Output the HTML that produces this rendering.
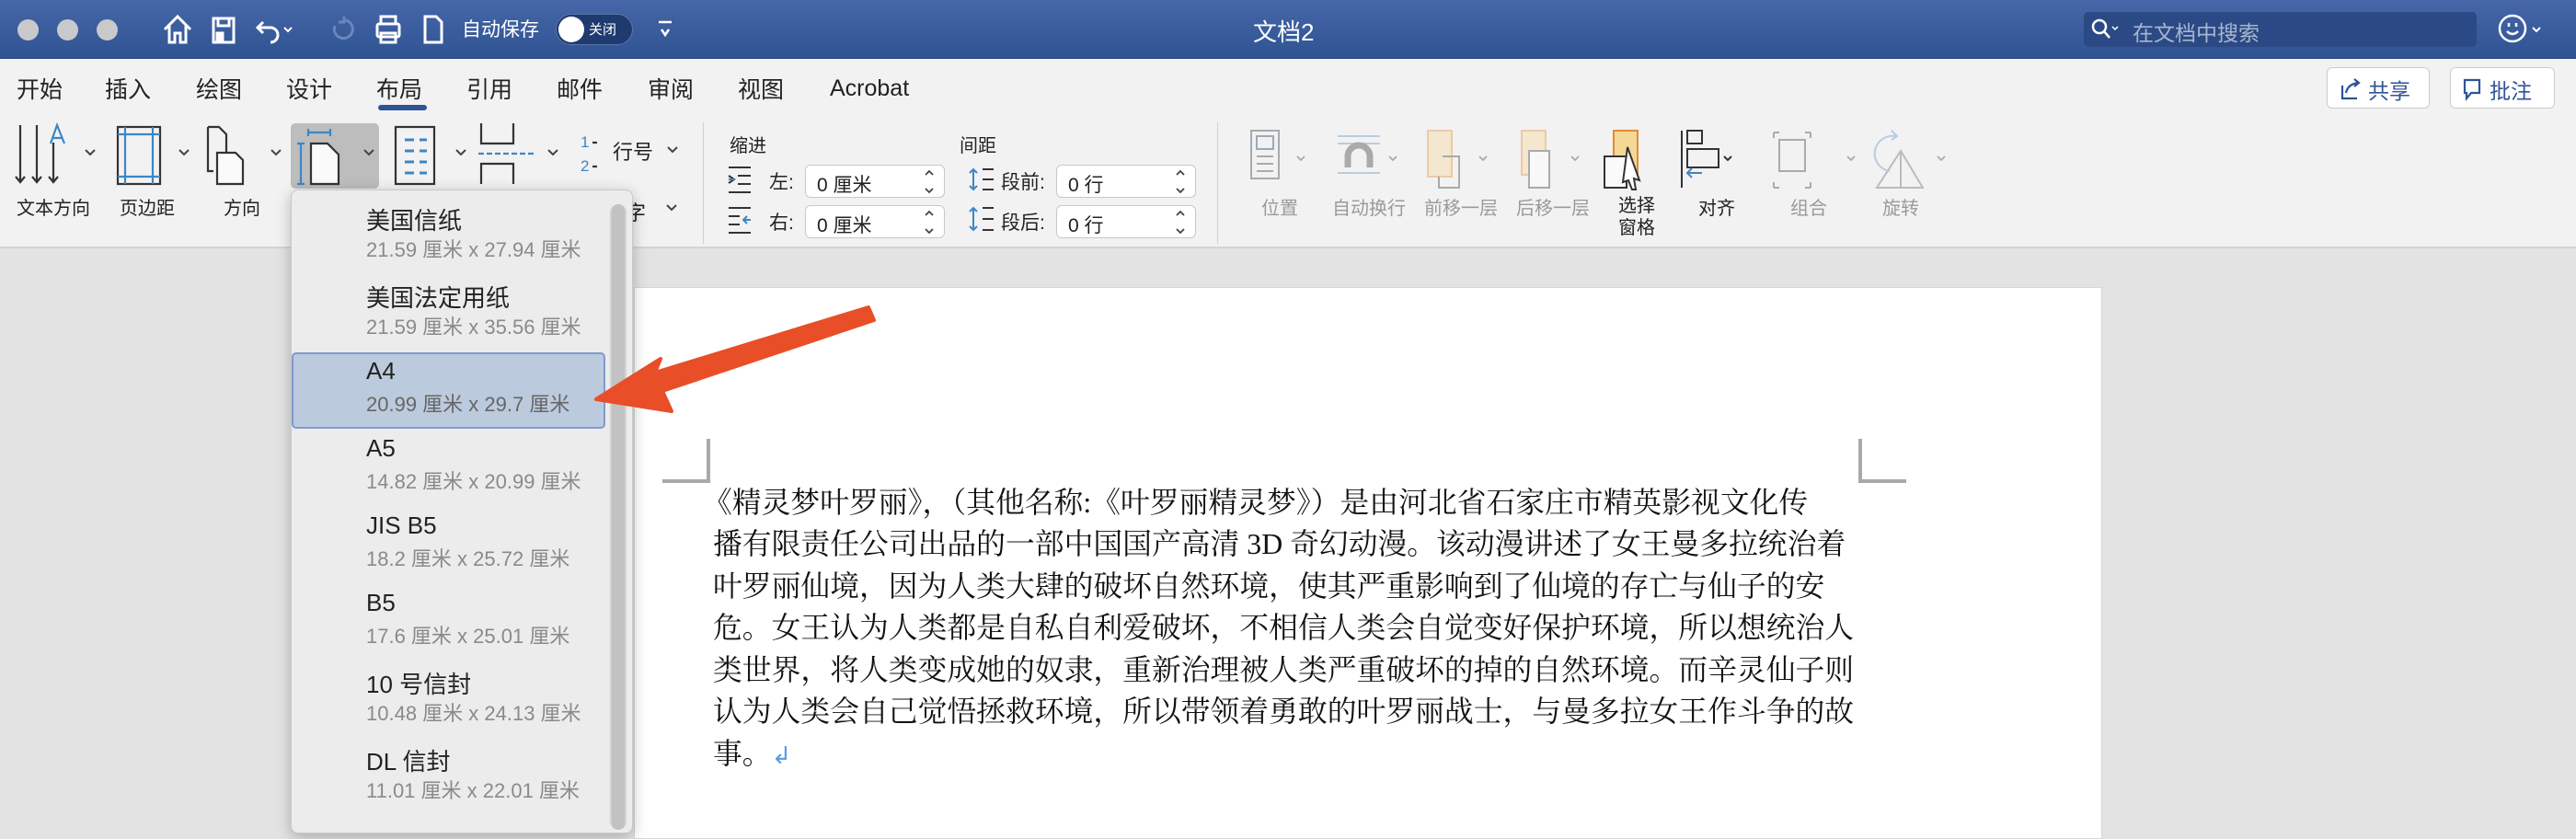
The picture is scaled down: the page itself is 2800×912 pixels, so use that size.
<!DOCTYPE html>
<html><head><meta charset="utf-8"><style>
*{margin:0;padding:0;box-sizing:border-box}
body{width:2800px;height:894px;overflow:hidden;position:relative;background:#e3e3e3;font-family:"Liberation Sans","Noto Sans CJK SC",sans-serif;color:#222}
.a{position:absolute;white-space:nowrap}
.title{left:0;top:0;width:2800px;height:64px;background:linear-gradient(#4667a8,#2f5393);border-bottom:1px solid #27467f}
.tl{width:23px;height:23px;border-radius:50%;background:#c9c9cc;top:21px}
.tabs{left:0;top:64px;width:2800px;height:206px;background:#f2f2f2;border-bottom:2px solid #d4d4d4}
.tab{top:78px;font-size:25px;color:#222}
.lbl{font-size:20px;color:#222;top:210px}
.dis{color:#9a9a9a}
.inp{background:#fff;border:1px solid #c8c8c8;border-radius:6px;height:36px;font-size:21px;padding:5px 12px}
.it{left:398px;font-size:26px;color:#222}
.sub{left:398px;font-size:22px;color:#8a8a8a}
.doc{font-family:"Liberation Serif","Noto Serif CJK SC",serif;font-size:31.8px;color:#111;left:775px}
</style></head><body>
<div class="a title"></div>
<div class="a tl" style="left:19px"></div><div class="a tl" style="left:62px"></div><div class="a tl" style="left:105px"></div>
<svg class="a" style="left:176px;top:14px" width="600" height="36" viewBox="0 0 600 36" fill="none" stroke="#fff" stroke-width="3">
<path d="M3 18 L17 4 L31 18 M8 14 V32 H14 V22 H20 V32 H26 V14"/>
<rect x="56" y="6" width="22" height="26"/><rect x="61" y="6" width="12" height="8"/><rect x="60" y="22" width="6" height="8" fill="#fff"/>
<path d="M110 10 L104 16 L110 22 M104 16 H118 A8 8 0 0 1 118 32"/><path d="M133 16 l4 4 l4 -4" stroke-width="2"/>
<path d="M200 8 A10 10 0 1 1 188 14 M198 4 V10 H192" stroke="#6b86bb"/>
<rect x="238" y="4" width="16" height="8"/><rect x="234" y="12" width="24" height="14" rx="2"/><rect x="238" y="22" width="16" height="10"/>
<path d="M286 4 H298 L304 10 V32 H286 Z"/>
<path d="M540 10 h14 M543 18 l4 6 l4 -6" stroke-width="2.5"/>
</svg>
<div class="a" style="left:502px;top:16px;font-size:21px;color:#fff">自动保存</div>
<div class="a" style="left:604px;top:15px;width:84px;height:34px;border-radius:17px;background:#1f3a6e;border:1px solid #5a75a8"></div>
<div class="a" style="left:607px;top:18px;width:28px;height:28px;border-radius:50%;background:#fff"></div>
<div class="a" style="left:640px;top:21px;font-size:15px;color:#fff">关闭</div>
<div class="a" style="left:1362px;top:15px;font-size:26px;color:#fff">文档2</div>
<div class="a" style="left:2265px;top:13px;width:427px;height:38px;background:#2b4a85;border-radius:5px"></div>
<svg class="a" style="left:2272px;top:18px" width="34" height="28" fill="none" stroke="#fff" stroke-width="2.5"><circle cx="10" cy="11" r="7"/><path d="M15 16 l6 7"/><path d="M24 11 l3 3 l3 -3" stroke-width="1.5"/></svg>
<div class="a" style="left:2318px;top:17px;font-size:23px;color:#a8b5cf">在文档中搜索</div>
<svg class="a" style="left:2715px;top:15px" width="60" height="34" fill="none" stroke="#fff" stroke-width="2.5"><circle cx="16" cy="16" r="14"/><path d="M10 19 Q16 25 22 19"/><path d="M12 10 v4 M20 10 v4"/><path d="M38 15 l4 4 l4 -4" stroke-width="2"/></svg>

<div class="a tabs"></div>
<div class="a tab" style="left:18px">开始</div><div class="a tab" style="left:114px">插入</div><div class="a tab" style="left:213px">绘图</div><div class="a tab" style="left:311px">设计</div><div class="a tab" style="left:409px">布局</div><div class="a tab" style="left:507px">引用</div><div class="a tab" style="left:605px">邮件</div><div class="a tab" style="left:704px">审阅</div><div class="a tab" style="left:802px">视图</div><div class="a tab" style="left:902px;top:82px">Acrobat</div>
<div class="a" style="left:411px;top:114px;width:53px;height:6px;border-radius:3px;background:#2f5496"></div>
<div class="a" style="left:2529px;top:73px;width:112px;height:45px;background:#fff;border:1px solid #ccc;border-radius:6px"></div>
<div class="a" style="left:2574px;top:80px;font-size:23px;color:#2f5496">共享</div>
<svg class="a" style="left:2542px;top:83px" width="26" height="26" fill="none" stroke="#2f5496" stroke-width="2.2"><path d="M4 10 V24 H20"/><path d="M8 18 Q10 8 22 7 M17 3 l5 4 l-5 4"/></svg>
<div class="a" style="left:2663px;top:73px;width:114px;height:45px;background:#fff;border:1px solid #ccc;border-radius:6px"></div>
<svg class="a" style="left:2676px;top:84px" width="24" height="26" fill="none" stroke="#2f5496" stroke-width="2.2"><path d="M3 3 H19 V17 H10 L5 23 V17 H3 Z"/></svg>
<div class="a" style="left:2706px;top:80px;font-size:23px;color:#2f5496">批注</div>

<div class="a" style="left:316px;top:134px;width:96px;height:71px;background:#bdbdbd;border-radius:5px"></div>
<svg class="a" style="left:0;top:130px" width="760" height="75" fill="none" stroke="#333" stroke-width="2.2">
<path d="M22 6 V68 M17 62 l5 6 l5 -6 M40 6 V68 M35 62 l5 6 l5 -6 M58 25 V68 M53 62 l5 6 l5 -6"/>
<path d="M55 26 L62 6 L70 26 M57 20 H67" stroke="#3d86c6"/>
<rect x="128" y="8" width="46" height="62"/><path d="M136 8 V70 M166 8 V70 M128 16 H174 M128 62 H174" stroke="#3d86c6"/>
<path d="M226 8 H238 L246 16 V52 M226 8 V56 H232"/><path d="M236 36 H256 L264 44 V70 H236 Z" fill="#fafafa"/>
<path d="M335 14 H359 M335 10 V18 M359 10 V18" stroke="#3d86c6"/><path d="M327 26 V70 M323 26 H331 M323 70 H331" stroke="#3d86c6"/>
<path d="M338 26 H356 L368 38 V70 H338 Z" fill="#fafafa"/>
<rect x="430" y="8" width="42" height="62"/><path d="M440 22 h10 M456 22 h8 M440 34 h10 M456 34 h8 M440 46 h10 M456 46 h8 M440 58 h10 M456 58 h8" stroke="#3d86c6" stroke-width="3"/>
<path d="M523 4 V26 H558 V4 M523 70 V48 H558 V70"/><path d="M520 37 H582" stroke="#3d86c6" stroke-dasharray="6 3"/>
<text x="631" y="30" font-size="17" fill="#3d86c6" stroke="none" font-family="Liberation Sans">1</text><text x="631" y="56" font-size="17" fill="#3d86c6" stroke="none" font-family="Liberation Sans">2</text>
<path d="M644 25 h5 M644 51 h5"/>
<g stroke="#444" stroke-width="2"><path d="M93 33 l5 5 l5 -5 M195 33 l5 5 l5 -5 M295 33 l5 5 l5 -5 M396 33 l5 5 l5 -5 M496 33 l5 5 l5 -5 M596 33 l5 5 l5 -5 M726 30 l5 5 l5 -5"/></g>
</svg>
<div class="a" style="left:666px;top:148px;font-size:22px">行号</div>
<div class="a lbl" style="left:18px">文本方向</div><div class="a lbl" style="left:130px">页边距</div><div class="a lbl" style="left:243px">方向</div>
<div class="a" style="left:680px;top:214px;font-size:22px">字</div>
<svg class="a" style="left:722px;top:220px" width="16" height="12" fill="none" stroke="#444" stroke-width="2"><path d="M3 3 l5 5 l5 -5"/></svg>
<div class="a" style="left:764px;top:133px;width:1px;height:132px;background:#d0d0d0"></div>
<div class="a" style="left:1323px;top:133px;width:1px;height:132px;background:#d0d0d0"></div>

<div class="a" style="left:793px;top:142px;font-size:20px">缩进</div>
<div class="a" style="left:1043px;top:142px;font-size:20px">间距</div>
<svg class="a" style="left:790px;top:178px" width="540" height="90" fill="none" stroke="#333" stroke-width="2">
<path d="M2 4 H26 M12 13 H26 M12 22 H26 M2 31 H26 M2 13 l6 4 l-6 4" /><path d="M2 17 H9" stroke="#3d86c6"/>
<path d="M2 48 H26 M2 57 H14 M2 66 H14 M2 75 H26"/><path d="M26 61 H18 M22 57 l-4 4 l4 4" stroke="#3d86c6"/>
<path d="M268 6 V28 M264 10 l4 -4 l4 4 M264 24 l4 4 l4 -4" stroke="#3d86c6"/><path d="M278 6 H290 M278 17 H290 M278 28 H290"/>
<path d="M268 48 V72 M264 52 l4 -4 l4 4 M264 68 l4 4 l4 -4" stroke="#3d86c6"/><path d="M278 48 H290 M278 60 H290 M278 72 H290"/>
</svg>
<div class="a" style="left:836px;top:182px;font-size:21px">左:</div>
<div class="a" style="left:836px;top:226px;font-size:21px">右:</div>
<div class="a" style="left:1088px;top:182px;font-size:21px">段前:</div>
<div class="a" style="left:1088px;top:226px;font-size:21px">段后:</div>
<div class="a inp" style="left:875px;top:179px;width:152px">0 厘米</div>
<div class="a inp" style="left:875px;top:223px;width:152px">0 厘米</div>
<div class="a inp" style="left:1148px;top:179px;width:152px">0 行</div>
<div class="a inp" style="left:1148px;top:223px;width:152px">0 行</div>
<svg class="a" style="left:1000px;top:181px" width="320" height="80" fill="none" stroke="#444" stroke-width="1.8">
<path d="M6 9 l4 -4 l4 4 M6 24 l4 4 l4 -4 M6 53 l4 -4 l4 4 M6 68 l4 4 l4 -4"/>
<path d="M279 9 l4 -4 l4 4 M279 24 l4 4 l4 -4 M279 53 l4 -4 l4 4 M279 68 l4 4 l4 -4"/>
</svg>

<svg class="a" style="left:1350px;top:130px" width="800" height="80" fill="none" stroke-width="2">
<rect x="10" y="12" width="30" height="52" stroke="#aaa"/><rect x="16" y="18" width="18" height="14" stroke="#9ab"/><path d="M16 40 H34 M16 48 H34 M16 56 H34" stroke="#aaa"/>
<path d="M104 18 H150 M104 26 H150 M104 58 H150" stroke="#b6cde3"/><path d="M115 52 V40 A12 12 0 0 1 139 40 V52" stroke="#aaa" stroke-width="7"/>
<rect x="202" y="12" width="26" height="50" fill="#f4e6cf" stroke="#edc9a6"/><path d="M218 40 H236 V74 H214 V62" stroke="#aaa"/>
<rect x="304" y="12" width="26" height="48" fill="#f4e6cf" stroke="#edc9a6"/><rect x="312" y="34" width="22" height="40" fill="#f8f8f8" stroke="#aaa"/>
<rect x="404" y="12" width="26" height="48" fill="#f6d896" stroke="#e28a3a"/><rect x="394" y="40" width="24" height="34" fill="#fafafa" stroke="#333"/><path d="M419 30 L432 66 L426 64 L428 76 L424 76 L420 66 L414 68 Z" fill="#fff" stroke="#333"/>
<path d="M478 12 V74" stroke="#333"/><rect x="484" y="12" width="16" height="14" stroke="#333"/><rect x="484" y="32" width="34" height="20" stroke="#333"/><path d="M500 58 H484 M489 53 l-5 5 l5 5" stroke="#3d86c6"/>
<rect x="584" y="22" width="28" height="34" stroke="#aaa"/><path d="M578 14 h6 M578 14 v6 M612 14 h6 M618 14 v6 M578 74 h6 M578 74 v-6 M618 74 h-6 M618 74 v-6" stroke="#aaa"/>
<path d="M690 74 L716 34 L740 74 Z M716 34 V74" stroke="#bbb"/><path d="M704 56 A14 14 0 0 1 710 18 M706 12 l6 6 l-6 4" stroke="#b6cde3"/>
<g stroke="#aaa" stroke-width="1.8"><path d="M60 40 l4 4 l4 -4 M160 40 l4 4 l4 -4 M258 40 l4 4 l4 -4 M358 40 l4 4 l4 -4 M658 40 l4 4 l4 -4 M756 40 l4 4 l4 -4"/></g>
<path d="M524 40 l4 4 l4 -4" stroke="#333" stroke-width="2"/>
</svg>
<div class="a lbl dis" style="left:1371px">位置</div>
<div class="a lbl dis" style="left:1448px">自动换行</div>
<div class="a lbl dis" style="left:1548px">前移一层</div>
<div class="a lbl dis" style="left:1648px">后移一层</div>
<div class="a lbl" style="left:1759px;line-height:24px;top:212px">选择<br>窗格</div>
<div class="a lbl" style="left:1846px">对齐</div>
<div class="a lbl dis" style="left:1946px">组合</div>
<div class="a lbl dis" style="left:2046px">旋转</div>

<div class="a" style="left:689px;top:312px;width:1596px;height:600px;background:#fff;border:1px solid #d6d6d6"></div>
<div class="a" style="left:720px;top:477px;width:52px;height:48px;border-right:4px solid #a9a9a9;border-bottom:4px solid #a9a9a9"></div>
<div class="a" style="left:2020px;top:477px;width:52px;height:48px;border-left:4px solid #a9a9a9;border-bottom:4px solid #a9a9a9"></div>
<div class="a doc" style="top:521px;left:764px">《精灵梦叶罗丽》，（其他名称:《叶罗丽精灵梦》）是由河北省石家庄市精英影视文化传</div>
<div class="a doc" style="top:566px">播有限责任公司出品的一部中国国产高清 3D 奇幻动漫。该动漫讲述了女王曼多拉统治着</div>
<div class="a doc" style="top:612px">叶罗丽仙境，因为人类大肆的破坏自然环境，使其严重影响到了仙境的存亡与仙子的安</div>
<div class="a doc" style="top:657px">危。女王认为人类都是自私自利爱破坏，不相信人类会自觉变好保护环境，所以想统治人</div>
<div class="a doc" style="top:703px">类世界，将人类变成她的奴隶，重新治理被人类严重破坏的掉的自然环境。而辛灵仙子则</div>
<div class="a doc" style="top:748px">认为人类会自己觉悟拯救环境，所以带领着勇敢的叶罗丽战士，与曼多拉女王作斗争的故</div>
<div class="a doc" style="top:794px">事。<span style="color:#5a9be0;font-family:'Liberation Sans',sans-serif;font-size:26px">↲</span></div>

<div class="a" style="left:316px;top:206px;width:372px;height:700px;background:#ececec;border:1px solid #c9c9c9;border-radius:8px;box-shadow:0 4px 16px rgba(0,0,0,.25)"></div>
<div class="a" style="left:663px;top:222px;width:18px;height:680px;background:#d2d2d2;border-radius:9px"></div>
<div class="a" style="left:665px;top:222px;width:14px;height:680px;background:#c2c2c2;border-radius:7px"></div>
<div class="a" style="left:317px;top:383px;width:341px;height:83px;background:#bccadd;border:2px solid #7f9bcb;border-radius:5px"></div>
<div class="a it" style="top:220px">美国信纸</div><div class="a sub" style="top:254px">21.59 厘米 x 27.94 厘米</div>
<div class="a it" style="top:304px">美国法定用纸</div><div class="a sub" style="top:338px">21.59 厘米 x 35.56 厘米</div>
<div class="a it" style="top:388px">A4</div><div class="a sub" style="top:422px;color:#666">20.99 厘米 x 29.7 厘米</div>
<div class="a it" style="top:472px">A5</div><div class="a sub" style="top:506px">14.82 厘米 x 20.99 厘米</div>
<div class="a it" style="top:556px">JIS B5</div><div class="a sub" style="top:590px">18.2 厘米 x 25.72 厘米</div>
<div class="a it" style="top:640px">B5</div><div class="a sub" style="top:674px">17.6 厘米 x 25.01 厘米</div>
<div class="a it" style="top:724px">10 号信封</div><div class="a sub" style="top:758px">10.48 厘米 x 24.13 厘米</div>
<div class="a it" style="top:808px">DL 信封</div><div class="a sub" style="top:842px">11.01 厘米 x 22.01 厘米</div>

<svg class="a" style="left:0;top:0" width="2800" height="894">
<path d="M944 334 L712 405 L718 390 L648 434 L730 447 L720 425 L950 348 Z" fill="#e84e27" stroke="#e84e27" stroke-width="4" stroke-linejoin="round"/>
</svg>
</body></html>
